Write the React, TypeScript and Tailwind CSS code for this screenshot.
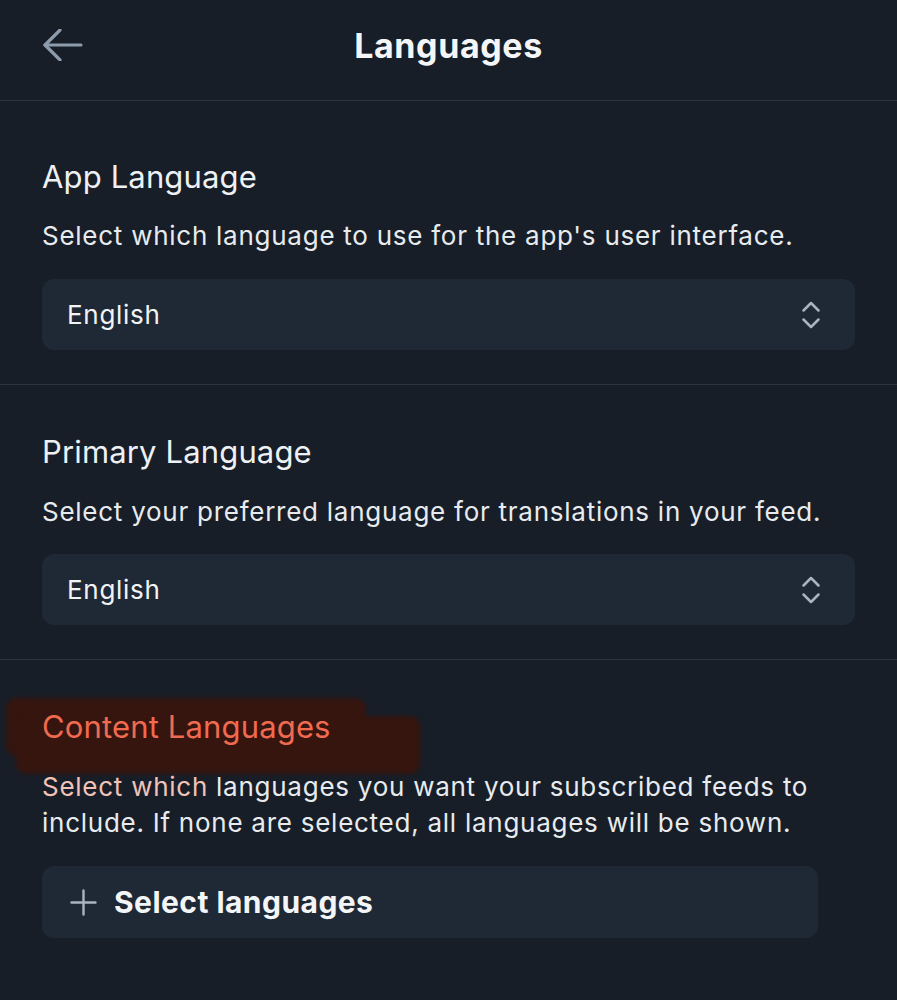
import { ChevronsUpDown } from "lucide-react";

function BackArrow() {
  return (
    <svg width="40" height="32" viewBox="0 0 40 32" fill="none" stroke="#8d9bab" strokeWidth="3.2" strokeLinecap="round" strokeLinejoin="round">
      <path d="M2 16h36" />
      <path d="M17 1 2 16l15 15" />
    </svg>
  );
}

function SelectBox({ value }: { value: string }) {
  return (
    <div className="flex h-[71px] w-full items-center justify-between rounded-[12px] bg-[#1f2935] pl-[25px] pr-[26px]">
      <span className="text-[26px] tracking-[0.7px] text-[#f1f3f5]">{value}</span>
      <ChevronsUpDown size={36} strokeWidth={1.7} className="text-[#aab4c0]" />
    </div>
  );
}

export default function App() {
  return (
    <div
      className="min-h-[1000px] w-[897px] bg-[#171e28] text-[#eef1f4]"
      style={{ fontFamily: "Inter, 'Noto Sans', sans-serif" }}
    >
      {/* Header */}
      <div className="relative flex h-[101px] items-center justify-center border-b border-[#2b343f]">
        <button className="absolute left-[43px] top-[29px]" aria-label="Back">
          <BackArrow />
        </button>
        <h1 className="pb-[10px] text-[34px] font-bold tracking-[0.6px] text-[#f3f5f7]">Languages</h1>
      </div>

      {/* App language */}
      <section className="border-b border-[#2b343f] px-[42px] pb-[34px] pt-[56px]">
        <h2 className="text-[31px] leading-[40px] tracking-[0.15px]">App Language</h2>
        <p className="mt-[21px] text-[26px] leading-[36px] tracking-[0.74px] text-[#e8ebee]">
          Select which language to use for the app's user interface.
        </p>
        <div className="mt-[25px]">
          <SelectBox value="English" />
        </div>
      </section>

      {/* Primary language */}
      <section className="border-b border-[#2b343f] px-[42px] pb-[34px] pt-[47px]">
        <h2 className="text-[31px] leading-[40px] tracking-[0.15px]">Primary Language</h2>
        <p className="mt-[22px] text-[26px] leading-[36px] tracking-[0.74px] text-[#e8ebee]">
          Select your preferred language for translations in your feed.
        </p>
        <div className="mt-[24px]">
          <SelectBox value="English" />
        </div>
      </section>

      {/* Content languages */}
      <section className="relative px-[42px] pt-[47px]">
        <div className="absolute left-[6px] top-[38px] h-[58px] w-[360px] rounded-[10px] bg-[#36150f] blur-[2px]" />
        <div className="absolute left-[16px] top-[56px] h-[58px] w-[404px] rounded-[10px] bg-[#36150f] blur-[2px]" />
        <h2 className="relative text-[31px] leading-[40px] tracking-[0.15px] text-[#f06a4f]">Content Languages</h2>
        <p className="relative mt-[22px] text-[26px] leading-[36px] tracking-[0.74px] text-[#e8ebee]">
          <span className="text-[#f2c2b6]">Select which</span> languages you want your subscribed feeds to
          <br />
          include. If none are selected, all languages will be shown.
        </p>
        <button className="mt-[25px] flex h-[72px] w-[776px] items-center gap-[17px] rounded-[12px] bg-[#1f2935] pl-[28px]">
          <svg width="27" height="27" viewBox="0 0 27 27" fill="none" stroke="#aab4c0" strokeWidth="2.4" strokeLinecap="round">
            <path d="M13.5 1.5v24M1.5 13.5h24" />
          </svg>
          <span className="text-[30px] font-bold tracking-[0.45px] text-[#f3f5f7]">Select languages</span>
        </button>
      </section>
    </div>
  );
}
